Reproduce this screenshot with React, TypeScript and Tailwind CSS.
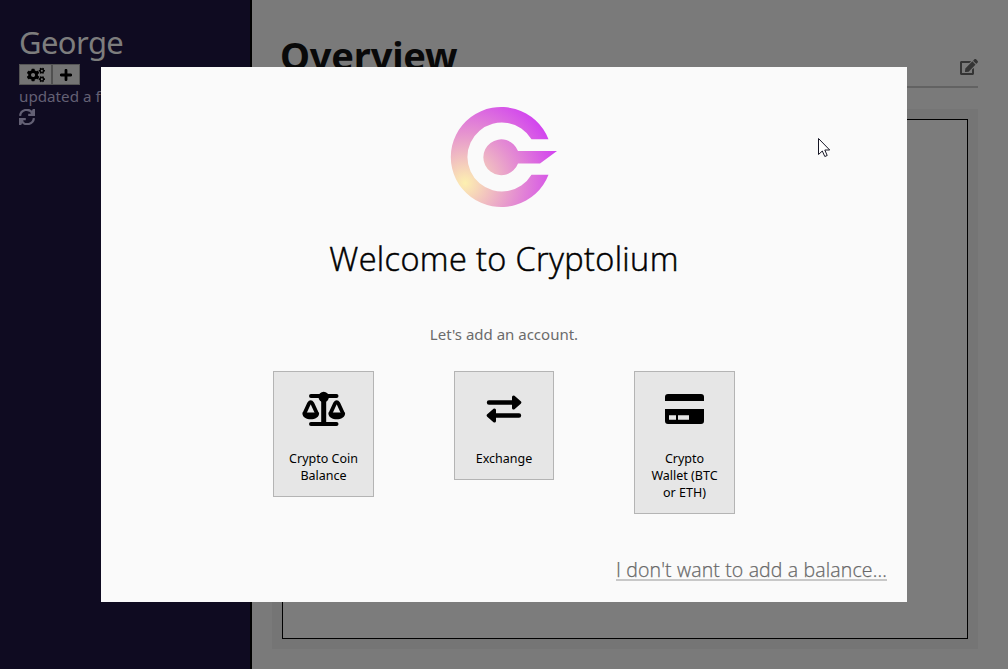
import type { ReactNode } from "react";
import { FaEdit, FaCogs } from "react-icons/fa";

function Logo() {
  return (
    <svg width="108" height="102" viewBox="0 0 108 102" className="block">
      <defs>
        <radialGradient id="glow" gradientUnits="userSpaceOnUse" cx="15" cy="77" r="102">
          <stop offset="0" stopColor="#fdf0b0" />
          <stop offset="0.5" stopColor="#e591d0" />
          <stop offset="1" stopColor="#cf38f4" />
        </radialGradient>
      </defs>
      <g fill="url(#glow)">
        <path d="M98.500 33.300 A50.500 50 0 1 0 98.500 68.800 H81.500 A34.500 34.500 0 1 1 81.500 33.300 Z" />
        <path d="M68 45 H107 L90 57.500 H68 A17.900 17.900 0 1 1 68 45 Z" />
      </g>
    </svg>
  );
}

function BalanceIcon() {
  return (
    <svg width="44" height="36" viewBox="0 0 44 36">
      <path d="M9 5 H34.500 M9 33 H34.500" stroke="#000" strokeWidth="4" strokeLinecap="round" />
      <path d="M21.700 5 V33" stroke="#000" strokeWidth="5" />
      <circle cx="21.700" cy="6" r="5.200" />
      <g fill="none" stroke="#000" strokeWidth="3.800" strokeLinejoin="round">
        <path d="M2.400 22.500 L7 12.500 Q8.700 10 10.400 12.500 L15 22.500" />
        <path d="M28.400 22.500 L33 12.500 Q34.700 10 36.400 12.500 L41 22.500" />
      </g>
      <path d="M0.500 21.500 H17 C18.500 30.500 -1 30.500 0.500 21.500 Z M26.500 21.500 H43 C44.500 30.500 25 30.500 26.500 21.500 Z" />
    </svg>
  );
}

function ExchangeIcon() {
  return (
    <svg width="36" height="28" viewBox="0 0 36 28">
      <path d="M3 7.500 H29 M7 20.500 H33" stroke="#000" strokeWidth="4.400" strokeLinecap="round" />
      <path d="M27.500 2 L33.800 7.500 L27.500 13 Z M8.500 15 L2.200 20.500 L8.500 26 Z" stroke="#000" strokeWidth="3" strokeLinejoin="round" />
    </svg>
  );
}

function CardIcon() {
  return (
    <svg width="39" height="30" viewBox="0 0 39 30">
      <path d="M0 7 V3 Q0 0 3 0 H36 Q39 0 39 3 V7 Z" />
      <path fillRule="evenodd" d="M0 15 H39 V27 Q39 30 36 30 H3 Q0 30 0 27 Z M4 21.200 V25.800 H11 V21.200 Z M13 21.200 V25.800 H24 V21.200 Z" />
    </svg>
  );
}

function PlusIcon() {
  return (
    <svg width="12" height="12" viewBox="0 0 12 12">
      <path d="M6 1.300 V10.700 M1.300 6 H10.700" stroke="#000" strokeWidth="2.800" strokeLinecap="round" />
    </svg>
  );
}

function SyncIcon() {
  return (
    <svg width="16" height="16" viewBox="0 0 16 16" className="block text-[#636074]">
      <path d="M1.100 6.800 A6.600 6.600 0 0 1 13.300 4 M14.900 9.200 A6.600 6.600 0 0 1 2.700 12" fill="none" stroke="currentColor" strokeWidth="2.200" />
      <path d="M13.800 0 H16 V7 H9.200 V4.800 L11.500 4.800 Z M2.200 16 H0 V9 H6.800 V11.200 L4.500 11.200 Z" fill="currentColor" />
    </svg>
  );
}

function Choice({ icon, className, children }: { icon: ReactNode; className: string; children: ReactNode }) {
  return (
    <button className={`flex flex-col items-center border border-[#b4b4b4] bg-[#e6e6e6] text-black ${className}`}>
      <span className="mt-[18px] flex h-[38px] items-center justify-center">{icon}</span>
      <span className="mt-[22px] whitespace-nowrap text-[12.5px] leading-[17px]">{children}</span>
    </button>
  );
}

export default function App() {
  return (
    <div className="relative flex h-[669px] w-[1008px] overflow-hidden bg-[#7a7a7a] font-['Noto_Sans',sans-serif]">
      <aside className="w-[252px] shrink-0 border-r-2 border-black bg-[#0f0b21] pl-[19px] pt-[21px]">
        <h2 className="h-[43px] text-[31px] leading-[42px] tracking-[-0.6px] text-[#7d7d7d]">George</h2>
        <div className="flex h-[21px] w-[61px] border border-[#555] bg-[#747474] text-black">
          <span className="flex w-[33px] items-center justify-center border-r-2 border-[#505050]"><FaCogs size={18} /></span>
          <span className="flex flex-1 items-center justify-center"><PlusIcon /></span>
        </div>
        <p className="h-[24px] whitespace-nowrap text-[15.2px] leading-[22px] text-[#636074]">updated a few seconds ago</p>
        <SyncIcon />
      </aside>
      <main className="flex-1 pl-[20px] pr-[30px]">
        <header className="flex h-[88px] items-start justify-between border-b-2 border-[#626262] pl-[8px]">
          <h1 className="pt-[30px] text-[38px] font-bold leading-[50px] tracking-[-0.2px] text-[#090909]">Overview</h1>
          <FaEdit size={18} className="mt-[58px] text-[#343434]" />
        </header>
        <section className="mt-[21px] h-[540px] bg-[#757575] p-[10px]">
          <div className="h-full border border-black bg-[#7c7c7c]" />
        </section>
      </main>
      <div className="absolute left-[101px] top-[67px] flex h-[535px] w-[806px] flex-col items-center bg-[#fafafa]">
        <div className="mt-[39px]"><Logo /></div>
        <h2 className="mt-[27px] whitespace-nowrap font-['Open_Sans',sans-serif] text-[32.5px] font-light leading-[48px] tracking-[0.37px] text-black [-webkit-text-stroke:0.5px_#000]">Welcome to Cryptolium</h2>
        <p className="mt-[39px] text-[15px] leading-[24px] text-[#6b6b6b]">Let's add an account.</p>
        <div className="mt-[25px] flex h-[143px] w-[462px] items-start justify-between">
          <Choice icon={<BalanceIcon />} className="h-[126px] w-[101px]">Crypto Coin<br />Balance</Choice>
          <Choice icon={<ExchangeIcon />} className="h-[109px] w-[100px]">Exchange</Choice>
          <Choice icon={<CardIcon />} className="h-[143px] w-[101px]">Crypto<br />Wallet (BTC<br />or ETH)</Choice>
        </div>
        <a className="mr-[20px] mt-[43px] h-[24px] self-end whitespace-nowrap border-b-2 border-[#c8c8c8] font-['Open_Sans',sans-serif] text-[19.500px] font-light leading-[26px] tracking-[0.14px] text-[#686868] [-webkit-text-stroke:0.25px_#686868]">I don't want to add a balance...</a>
      </div>
      <svg className="absolute left-[818px] top-[138px]" width="13" height="20" viewBox="0 0 13 20">
        <path d="M0.500 0.500 V16.500 L4.300 13 L6.800 18.500 L9.200 17.500 L6.800 12 H11.700 Z" fill="#fff" stroke="#161625" />
      </svg>
    </div>
  );
}
